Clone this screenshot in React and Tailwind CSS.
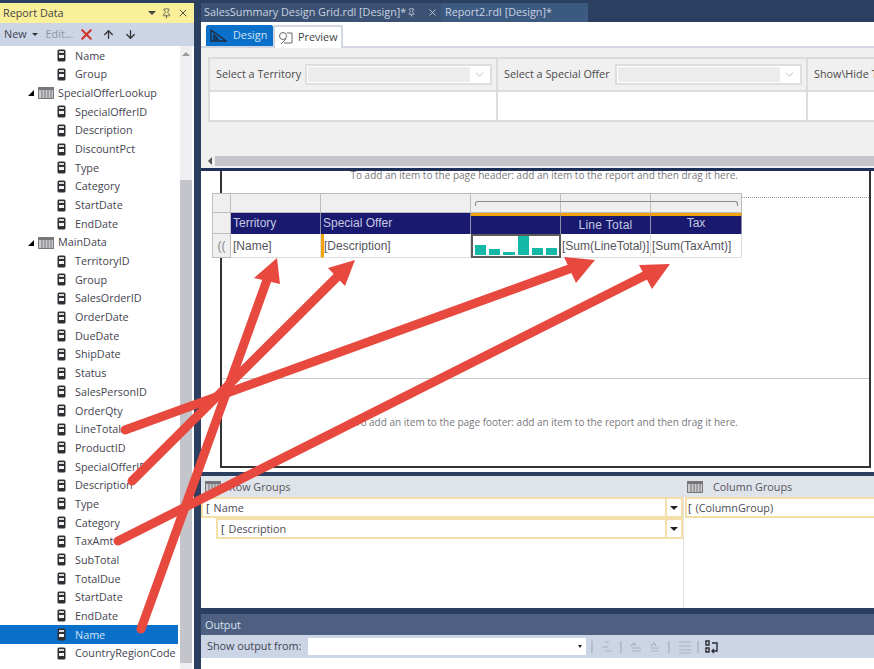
import { ArrowDown, ArrowUp, ChevronDown, Pin, X } from "lucide-react";

const fields = [
  { name: "Name" },
  { name: "Group" },
  { name: "SpecialOfferLookup", table: true },
  { name: "SpecialOfferID" },
  { name: "Description" },
  { name: "DiscountPct" },
  { name: "Type" },
  { name: "Category" },
  { name: "StartDate" },
  { name: "EndDate" },
  { name: "MainData", table: true },
  { name: "TerritoryID" },
  { name: "Group" },
  { name: "SalesOrderID" },
  { name: "OrderDate" },
  { name: "DueDate" },
  { name: "ShipDate" },
  { name: "Status" },
  { name: "SalesPersonID" },
  { name: "OrderQty" },
  { name: "LineTotal" },
  { name: "ProductID" },
  { name: "SpecialOfferID" },
  { name: "Description" },
  { name: "Type" },
  { name: "Category" },
  { name: "TaxAmt" },
  { name: "SubTotal" },
  { name: "TotalDue" },
  { name: "StartDate" },
  { name: "EndDate" },
  { name: "Name", selected: true },
  { name: "CountryRegionCode" },
];

const bars = [10, 6, 3, 19, 7, 7];

function FieldIcon() {
  return (
    <svg width="9" height="13" viewBox="0 0 9 13" className="shrink-0">
      <rect x="0.5" y="0.5" width="8" height="12" rx="1.5" fill="#2f2f33" />
      <rect x="2" y="2" width="5" height="2" fill="#d8d8d8" />
      <rect x="2" y="6" width="5" height="3" fill="#f4f4f4" />
    </svg>
  );
}

function GridIcon({ className = "" }) {
  return (
    <svg width="16" height="12" viewBox="0 0 16 12" className={`shrink-0 ${className}`}>
      <rect x="0.5" y="0.5" width="15" height="11" fill="#c9c9cc" stroke="#77777b" />
      <rect x="1" y="1" width="14" height="2" fill="#77777b" />
      <path d="M4 3v8M7 3v8M10 3v8M13 3v8" stroke="#77777b" />
    </svg>
  );
}

function TreeRow({ field }) {
  if (field.table) {
    return (
      <div className="flex h-[18.68px] items-center pl-[28px]">
        <span className="mr-[4px] h-0 w-0 border-b-[6px] border-l-[6px] border-b-black border-l-transparent" />
        <GridIcon className="mr-[4px]" />
        <span className="whitespace-nowrap">{field.name}</span>
      </div>
    );
  }
  return (
    <div
      className={`flex h-[18.68px] items-center pl-[57px] ${
        field.selected ? "bg-[#0a70c9] text-[#cfe4f7]" : ""
      }`}
    >
      <FieldIcon />
      <span className="ml-[9px] whitespace-nowrap">{field.name}</span>
    </div>
  );
}

function ReportData() {
  return (
    <aside className="flex h-full w-[194px] shrink-0 flex-col pt-[3px]">
      <div className="flex h-[20px] items-center justify-between bg-[#fbf09a] px-[3px] text-[#3f3f45]">
        <span>Report Data</span>
        <div className="flex items-center gap-[5px] pr-[2px]">
          <span className="h-0 w-0 border-x-[4px] border-t-[4px] border-x-transparent border-t-[#444]" />
          <Pin size={11} strokeWidth={1.6} />
          <X size={12} strokeWidth={1.8} />
        </div>
      </div>
      <div className="flex h-[23px] items-center bg-[#ccd5e6] pl-[4px]">
        <span className="text-[#3f4350]">New</span>
        <span className="ml-[5px] h-0 w-0 border-x-[3px] border-t-[3px] border-x-transparent border-t-[#333]" />
        <span className="ml-[8px] text-[#8e94a3]">Edit...</span>
        <X size={17} strokeWidth={3} className="ml-[5px] text-[#d0342c]" />
        <ArrowUp size={13} strokeWidth={2.4} className="ml-[7px] text-[#333]" />
        <ArrowDown size={13} strokeWidth={2.4} className="ml-[9px] text-[#333]" />
      </div>
      <div className="flex min-h-0 flex-1 bg-white text-[#44444f]">
        <div className="w-[178px] shrink-0 overflow-hidden pt-[0.5px]">
          {fields.map((field, i) => (
            <TreeRow key={i} field={field} />
          ))}
        </div>
        <div className="ml-[2px] flex w-[12px] shrink-0 flex-col bg-[#efeff2]">
          <div className="flex h-[134px] justify-center pt-[6px]">
            <span className="h-0 w-0 border-x-[4px] border-b-[4px] border-x-transparent border-b-[#999]" />
          </div>
          <div className="mb-[6px] flex-1 bg-[#c3c5cb]" />
        </div>
      </div>
    </aside>
  );
}

function TabStrip() {
  return (
    <div className="flex h-[22px] shrink-0 items-stretch pt-[3px] text-[#c9d2e0]">
      <div className="flex w-[240px] items-center justify-between bg-[#3c5274] pl-[3px] pr-[3px]">
        <span className="whitespace-nowrap">SalesSummary Design Grid.rdl [Design]*</span>
        <div className="flex items-center gap-[11px]">
          <Pin size={9} />
          <X size={11} strokeWidth={1.8} />
        </div>
      </div>
      <div className="flex w-[147px] items-center bg-[#3c5a80] pl-[4px]">
        <span className="whitespace-nowrap">Report2.rdl [Design]*</span>
      </div>
    </div>
  );
}

function ViewTabs() {
  return (
    <div className="flex h-[26px] shrink-0 items-end border-b-2 border-[#d3d7e2] bg-white pl-[5px]">
      <div className="flex h-[21px] w-[67px] items-center gap-[6px] rounded-t-[2px] bg-[#0a70c9] pl-[4px] text-[#cfe4f7]">
        <svg width="17" height="14" viewBox="0 0 17 14">
          <path d="M1 1v11h15z M4 6v4h4z" fill="none" stroke="#1c2c44" strokeWidth="1.4" />
        </svg>
        <span>Design</span>
      </div>
      <div className="-mb-[2px] flex h-[23px] w-[70px] items-center gap-[5px] rounded-t-[2px] border-x-2 border-t-2 border-[#d3d7e2] bg-white pl-[3px] text-[#3f3f45]">
        <svg width="15" height="14" viewBox="0 0 15 14">
          <circle cx="5" cy="5" r="3.5" fill="none" stroke="#6a6a6a" />
          <path d="M8 8l-5 5M9 2h5v10H6" fill="none" stroke="#6a6a6a" />
        </svg>
        <span>Preview</span>
      </div>
    </div>
  );
}

function ParamCell({ label, className, input }) {
  return (
    <div className={`flex shrink-0 flex-col border-r-2 border-[#dcdcdc] ${className}`}>
      <div className="flex h-[33px] items-center border-b-2 border-[#dcdcdc] pl-[6px] pr-[4px]">
        <span className="whitespace-nowrap">{label}</span>
        {input && (
          <div className="ml-auto flex h-[21px] w-[187px] items-center border-2 border-[#dedede] bg-white p-[1px]">
            <div className="h-full flex-1 bg-[#ececec]" />
            <ChevronDown size={13} strokeWidth={1.2} className="mx-[3px] text-[#999]" />
          </div>
        )}
      </div>
      <div className="flex-1 bg-white" />
    </div>
  );
}

function Parameters() {
  return (
    <div className="h-[106px] shrink-0 bg-[#f0f0f0] pl-[7px] pt-[9px] text-[#4a4a4a]">
      <div className="flex h-[65px] overflow-hidden border-y-2 border-l-2 border-[#dcdcdc]">
        <ParamCell label="Select a Territory" className="w-[288px]" input />
        <ParamCell label="Select a Special Offer" className="w-[310px]" input />
        <ParamCell label="Show\Hide Tablix" className="w-[100px]" />
      </div>
    </div>
  );
}

function HScroll() {
  return (
    <div className="flex h-[14px] shrink-0 items-center bg-[#f0f0f0] pl-[7px]">
      <span className="mr-[3px] h-0 w-0 border-y-[4px] border-r-[4px] border-y-transparent border-r-[#555]" />
      <div className="h-[10px] flex-1 bg-[#c3c5cb]" />
    </div>
  );
}

function HeadCell({ children, className = "" }) {
  return (
    <div
      className={`flex items-center justify-center border-r border-[#8d8da8] bg-[#191970] text-[#c6c9e2] ${className}`}
    >
      {children}
    </div>
  );
}

function BodyCell({ children, className = "" }) {
  return (
    <div className={`flex items-center border-r border-b border-[#dedede] bg-white text-[#55555c] ${className}`}>
      {children}
    </div>
  );
}

function Tablix() {
  return (
    <div className="grid w-[530px] shrink-0 grid-cols-[19px_90px_150px_90px_90px_91px] grid-rows-[20px_21px_24px] font-['Liberation_Sans',sans-serif] text-[12px]">
      <div className="border border-[#bdbdbd] bg-[#efefef]" />
      <div className="border-y border-r border-[#bdbdbd] bg-[#efefef]" />
      <div className="border-y border-r border-[#bdbdbd] bg-[#efefef]" />
      <div className="relative col-span-3 grid grid-cols-3 border-y border-r border-[#bdbdbd] bg-[#efefef]">
        <div className="border-r border-[#bdbdbd]" />
        <div className="border-r border-[#bdbdbd]" />
        <div />
        <div className="absolute left-[4px] right-[3px] top-[7px] h-[5px] rounded-t-[3px] border-x border-t border-[#888]" />
      </div>

      <div className="border-x border-b border-[#bdbdbd] bg-[#efefef]" />
      <HeadCell className="justify-start pb-[2px] pl-[2px]">Territory</HeadCell>
      <HeadCell className="justify-start pb-[2px] pl-[2px]">Special Offer</HeadCell>
      <HeadCell className="border-t-[3px] border-t-[#f0a30a]" />
      <HeadCell className="border-t-[3px] border-t-[#f0a30a] pb-[1px] tracking-[0.3px]">Line Total</HeadCell>
      <HeadCell className="border-t-[3px] border-t-[#f0a30a] pb-[5px]">Tax</HeadCell>

      <div className="flex items-center justify-center border-x border-b border-[#bdbdbd] bg-[#efefef] text-[#888]">
        ((
      </div>
      <BodyCell className="pl-[2px]">[Name]</BodyCell>
      <BodyCell className="border-l-[3px] border-l-[#f0a30a] pl-0">[Description]</BodyCell>
      <div className="flex items-end gap-[3px] border-2 border-[#5a5a5a] bg-white px-[2px] py-[1px]">
        {bars.map((h, i) => (
          <span key={i} className="flex-1 bg-[#14b8a6]" style={{ height: h }} />
        ))}
      </div>
      <BodyCell className="overflow-hidden pl-[1px] whitespace-nowrap">[Sum(LineTotal)]</BodyCell>
      <BodyCell className="overflow-hidden pl-[1px] whitespace-nowrap">[Sum(TaxAmt)]</BodyCell>
    </div>
  );
}

function DesignSurface() {
  return (
    <div className="min-h-0 flex-1 border-t-[3px] border-[#1f3158] bg-white pl-[19px] pr-[3px]">
      <div className="flex h-[297px] flex-col border-x-2 border-b-2 border-[#333] text-[#77777b]">
        <div className="h-[22px] shrink-0 pr-[131px] text-right text-[10px] leading-[8px] whitespace-nowrap">
          To add an item to the page header: add an item to the report and then drag it here.
        </div>
        <div className="-ml-[10px] flex shrink-0">
          <Tablix />
          <div className="mt-[4px] h-0 flex-1 border-t border-dotted border-[#999]" />
        </div>
        <div className="mt-[120px] flex-1 border-t border-[#c8c8c8] pr-[131px] pt-[36px] text-right text-[10px] whitespace-nowrap">
          To add an item to the page footer: add an item to the report and then drag it here.
        </div>
      </div>
    </div>
  );
}

function GroupRow({ label, indent }) {
  return (
    <div className={`flex h-[21px] items-stretch border-2 border-[#f5dfa8] bg-white ${indent ? "ml-[15px]" : ""}`}>
      <div className="flex flex-1 items-center pl-[3px] pt-[1px] text-[#4a4a55]">
        <span className="mr-[4px] text-[#333]">[</span>
        {label}
      </div>
      <div className="flex w-[16px] items-center justify-center border-l-2 border-[#f5dfa8]">
        <span className="h-0 w-0 border-x-[4px] border-t-[4px] border-x-transparent border-t-[#222]" />
      </div>
    </div>
  );
}

function Groupings() {
  return (
    <div className="flex h-[136px] shrink-0 flex-col border-t-[4px] border-[#2b3f61] bg-white">
      <div className="flex h-[21px] shrink-0 items-center bg-[#dfe3ea] pt-[1px] text-[#55555c]">
        <div className="flex w-[486px] items-center pl-[4px]">
          <GridIcon />
          <span className="ml-[8px]">Row Groups</span>
        </div>
        <GridIcon />
        <span className="ml-[10px]">Column Groups</span>
      </div>
      <div className="flex flex-1">
        <div className="w-[483px] border-r border-[#e3e3e3]">
          <GroupRow label="Name" />
          <GroupRow label="Description" indent />
        </div>
        <div className="flex-1 pl-[1px]">
          <div className="flex h-[21px] items-center border-2 border-r-0 border-[#f5dfa8] pl-[1px] pt-[1px] text-[#4a4a55]">
            <span className="mr-[4px] text-[#333]">[</span>
            (ColumnGroup)
          </div>
        </div>
      </div>
    </div>
  );
}

function OutputPanel() {
  return (
    <div className="flex h-[61px] shrink-0 flex-col border-t-[6px] border-[#2b3f61] bg-white">
      <div className="flex h-[21px] shrink-0 items-center bg-[#4d6082] pl-[4px] pt-[1px] text-[#dbe2ee]">Output</div>
      <div className="flex h-[23px] shrink-0 items-center bg-[#ccd5e6] pl-[6px] text-[#3f4350]">
        <span className="w-[101px] whitespace-nowrap">Show output from:</span>
        <div className="flex h-[17px] w-[278px] items-center justify-end bg-white pr-[4px]">
          <span className="h-0 w-0 border-x-[2.5px] border-t-[3px] border-x-transparent border-t-[#222]" />
        </div>
        <svg width="130" height="16" viewBox="0 0 130 16" className="ml-[5px]">
          <path d="M1 2v12M30 2v12M78 2v12M107 2v12" stroke="#9aa3b5" />
          <path d="M14 3h4M11 8h6M14 12h7M40 7l3-3 2 3M41 9h9M41 12h9M60 7l3-3 2 3M60 9h8M60 12h8M88 3h12M88 7h12M88 11h12M88 14h12" fill="none" stroke="#aab2c2" strokeWidth="1.2" />
          <path d="M115 2h3v4h-3zM115 9h3v4h-3zM121 4h5v8h-5M123 10l-2 2 2 2" fill="none" stroke="#2b2b33" strokeWidth="1.4" />
        </svg>
      </div>
      <div className="flex-1 bg-white" />
    </div>
  );
}

function Arrow({ from, to, head }) {
  return (
    <g>
      <line x1={from[0]} y1={from[1]} x2={to[0]} y2={to[1]} stroke="#e8493f" strokeWidth="9" strokeLinecap="round" />
      <polygon points={head} fill="#e8493f" />
    </g>
  );
}

export default function App() {
  return (
    <div className="relative flex h-[669px] w-[874px] overflow-hidden bg-[#2b3f61] font-['Open_Sans','Noto_Sans',sans-serif] text-[10.8px]">
      <ReportData />
      <main className="ml-[7px] flex h-full min-w-0 flex-1 flex-col">
        <TabStrip />
        <ViewTabs />
        <Parameters />
        <HScroll />
        <DesignSurface />
        <Groupings />
        <OutputPanel />
      </main>
      <svg width="874" height="669" viewBox="0 0 874 669" className="pointer-events-none absolute left-0 top-0">
        <Arrow from={[141, 629]} to={[267, 280]} head="277,258 254,278 280,284" />
        <Arrow from={[132, 481]} to={[338, 276]} head="355,260 328,268 345,286" />
        <Arrow from={[125, 430]} to={[572, 268]} head="595,260 564,257 576,283" />
        <Arrow from={[118, 541]} to={[646, 275]} head="670,264 639,265 652,289" />
      </svg>
    </div>
  );
}
